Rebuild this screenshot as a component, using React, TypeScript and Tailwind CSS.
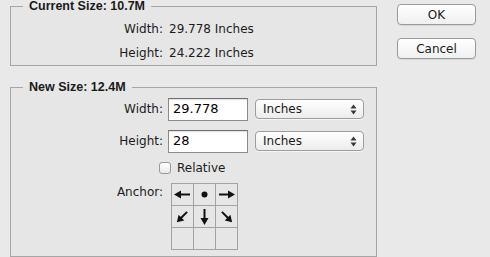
import React from "react";

function Arrow({ angle }: { angle: number }) {
  return (
    <svg width="21" height="21" viewBox="0 0 21 21">
      <g transform={`rotate(${angle} 10.5 10.5)`}>
        <line x1="3" y1="10.5" x2="13" y2="10.5" stroke="#111" strokeWidth="2" />
        <polygon points="12,6.5 19,10.5 12,14.5" fill="#111" />
      </g>
    </svg>
  );
}

function DiagArrow({ angle }: { angle: number }) {
  return (
    <svg width="21" height="21" viewBox="0 0 21 21">
      <g transform={`rotate(${angle} 10.5 10.5)`}>
        <line x1="4" y1="10.5" x2="13" y2="10.5" stroke="#111" strokeWidth="2" />
        <polygon points="12,6.5 18.5,10.5 12,14.5" fill="#111" />
      </g>
    </svg>
  );
}

function Dot() {
  return (
    <svg width="21" height="21" viewBox="0 0 21 21">
      <circle cx="10.5" cy="10.5" r="3" fill="#111" />
    </svg>
  );
}

function Select({ value }: { value: string }) {
  return (
    <div className="ml-[7px] w-[109px] h-[20px] rounded-[4px] border border-[#9d9d9d] bg-gradient-to-b from-white to-[#ececec] shadow-[0_1px_0_rgba(255,255,255,0.6)] flex items-center pl-[7px] pr-[6px]">
      <span className="flex-1 text-[12px] leading-none text-[#1a1a1a]">{value}</span>
      <svg width="7" height="11" viewBox="0 0 7 11">
        <polygon points="3.5,0.5 6.5,4.5 0.5,4.5" fill="#3a3a3a" />
        <polygon points="0.5,6.5 6.5,6.5 3.5,10.5" fill="#3a3a3a" />
      </svg>
    </div>
  );
}

function Input({ value }: { value: string }) {
  return (
    <div className="ml-[5px] w-[80px] h-[23px] bg-white border border-[#8a8a8a] border-t-[#6f6f6f] shadow-[inset_0_1px_1px_rgba(0,0,0,0.12)] flex items-center pl-[4px] text-[13px] text-black">
      {value}
    </div>
  );
}

export default function App() {
  const legend = "ml-[12px] px-[6px] font-['Liberation_Sans',Arial,sans-serif] font-bold text-[12.5px] leading-[14px] text-[#1a1a1a]";
  const cell = "w-[22px] h-[22px] border-r border-b border-[#a3a3a3] flex items-center justify-center";
  return (
    <div className="w-[490px] h-[257px] overflow-hidden bg-[#e9e9e9] flex font-['DejaVu_Sans',sans-serif] text-[12px] text-[#1c1c1c]">
      <div className="ml-[10px] w-[367px] flex flex-col shrink-0">
        <fieldset className="mt-[-1px] h-[72px] border border-[#a6a6a6] bg-[#e6e6e6]">
          <legend className={legend}>Current Size: 10.7M</legend>
          <div className="pt-[4px] grid grid-cols-[152px_auto] gap-x-[6px] leading-[24px]">
            <div className="text-right">Width:</div>
            <div>29.778 Inches</div>
            <div className="text-right">Height:</div>
            <div>24.222 Inches</div>
          </div>
        </fieldset>
        <fieldset className="mt-[14px] h-[200px] border border-[#a6a6a6] bg-[#e6e6e6]">
          <legend className={legend}>New Size: 12.4M</legend>
          <div className="pt-[3px] flex flex-col">
            <div className="h-[24px] flex items-center">
              <div className="w-[152px] text-right">Width:</div>
              <Input value="29.778" />
              <Select value="Inches" />
            </div>
            <div className="mt-[8px] h-[24px] flex items-center">
              <div className="w-[152px] text-right">Height:</div>
              <Input value="28" />
              <Select value="Inches" />
            </div>
            <div className="mt-[3px] h-[24px] flex items-center">
              <div className="ml-[148px] w-[12px] h-[12px] rounded-[3px] border border-[#999] bg-gradient-to-b from-white to-[#e9e9e9]" />
              <span className="ml-[6px]">Relative</span>
            </div>
            <div className="mt-[3px] flex items-start">
              <div className="w-[152px] text-right leading-[16px] pt-[1px]">Anchor:</div>
              <div className="ml-[8px] grid grid-cols-3 border-l border-t border-[#a3a3a3]">
                <div className={cell}><Arrow angle={180} /></div>
                <div className={cell}><Dot /></div>
                <div className={cell}><Arrow angle={0} /></div>
                <div className={cell}><DiagArrow angle={135} /></div>
                <div className={cell}><Arrow angle={90} /></div>
                <div className={cell}><DiagArrow angle={45} /></div>
                <div className={cell} />
                <div className={cell} />
                <div className={cell} />
              </div>
            </div>
          </div>
        </fieldset>
      </div>
      <div className="ml-[20px] pt-[4px] flex flex-col gap-[13px] w-[79px] shrink-0">
        <button className="h-[21px] rounded-[4px] border border-[#9a9a9a] bg-gradient-to-b from-white to-[#f0f0f0] shadow-[0_1px_1px_rgba(0,0,0,0.08)] text-[12px] leading-none text-[#1a1a1a]">OK</button>
        <button className="h-[21px] rounded-[4px] border border-[#9a9a9a] bg-gradient-to-b from-white to-[#f0f0f0] shadow-[0_1px_1px_rgba(0,0,0,0.08)] text-[12px] leading-none text-[#1a1a1a]">Cancel</button>
      </div>
    </div>
  );
}
